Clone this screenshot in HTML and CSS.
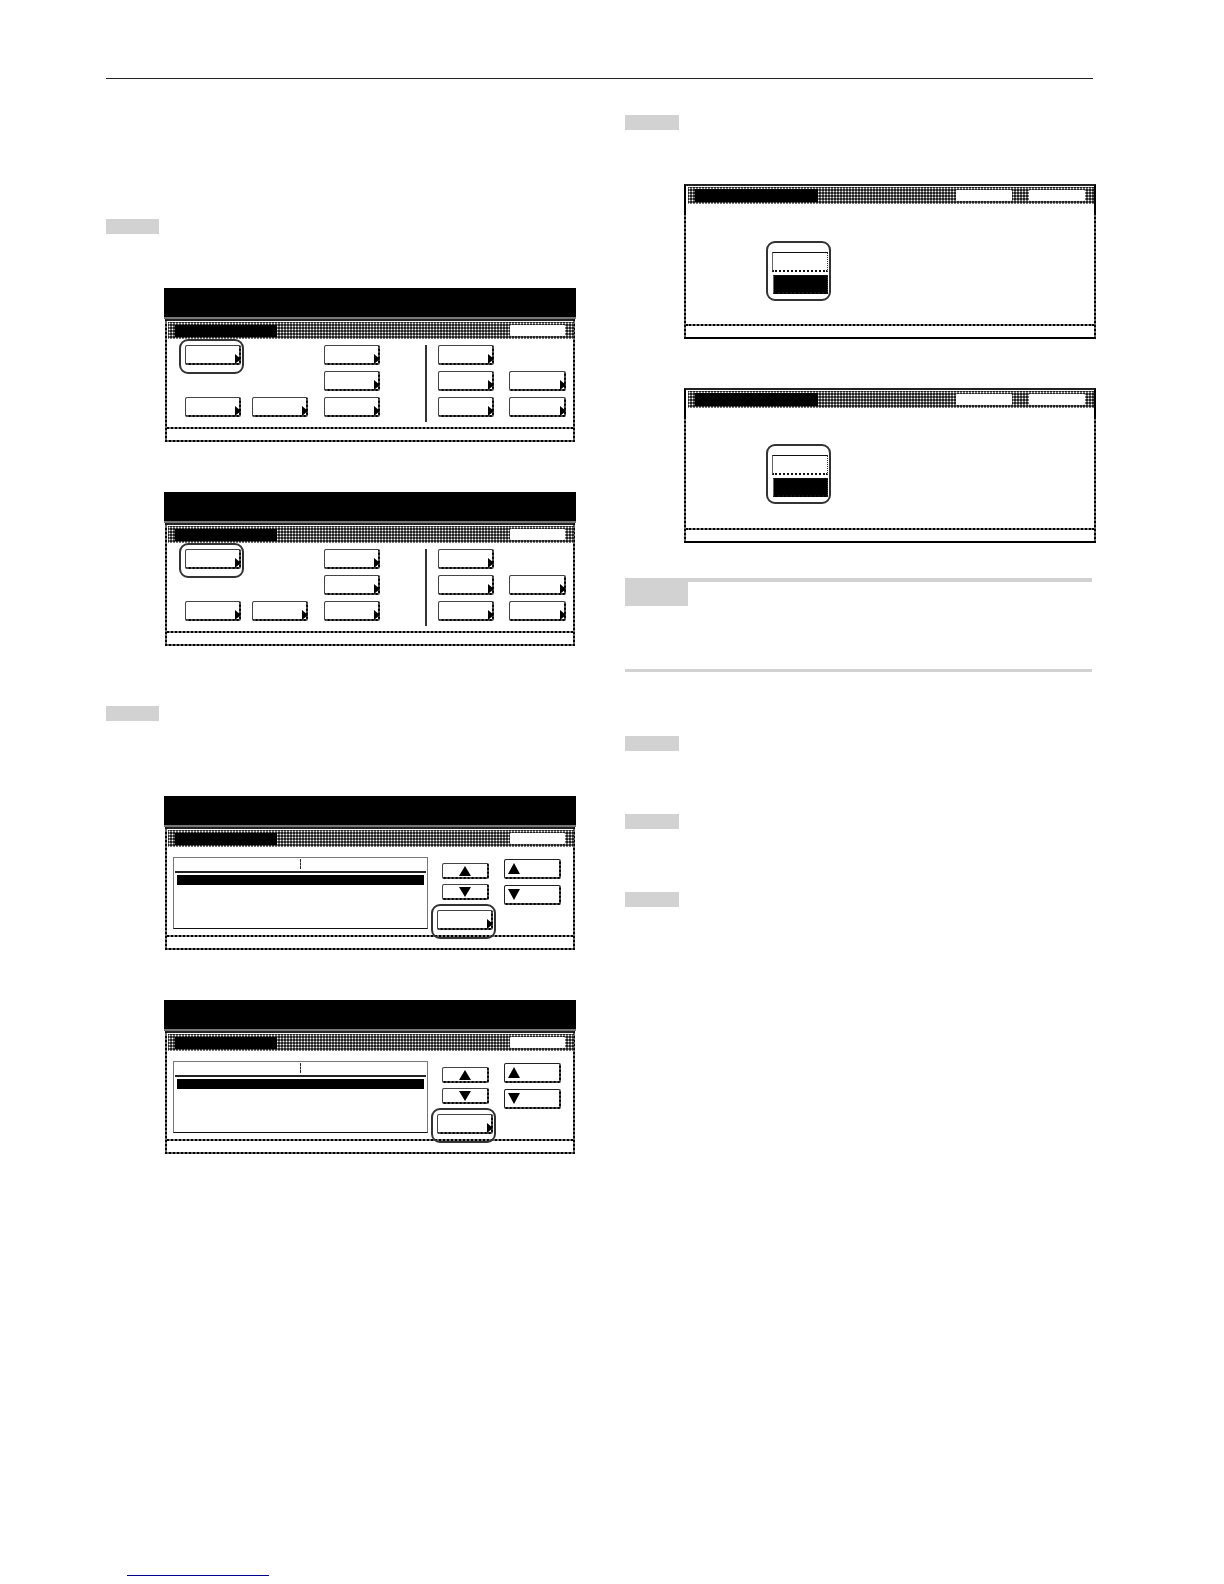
FILE: index.html
```html
<!DOCTYPE html>
<html>
<head>
  <meta charset="UTF-8">
  <title>Manual page</title>
  <link rel="stylesheet" href="styles.css">
</head>
<body>
  <div class="page">
    <div class="top-rule"></div>
    <div class="columns">
      <div class="left">
        <div class="tag tag-first"></div>

        <div class="screen menu-screen">
          <div class="head"></div>
          <div class="panel">
            <div class="titlebar"><div class="title"></div><div class="bar-btn"></div></div>
            <div class="menu-grid">
              <div class="btn ring c1 r1"></div>
              <div class="btn c3 r1"></div>
              <div class="btn c3 r2"></div>
              <div class="btn c1 r3"></div>
              <div class="btn c2 r3"></div>
              <div class="btn c3 r3"></div>
              <div class="sep"></div>
              <div class="btn c4 r1"></div>
              <div class="btn c4 r2"></div>
              <div class="btn c5 r2"></div>
              <div class="btn c4 r3"></div>
              <div class="btn c5 r3"></div>
            </div>
            <div class="foot"></div>
          </div>
        </div>

        <div class="screen menu-screen gap-small">
          <div class="head"></div>
          <div class="panel">
            <div class="titlebar"><div class="title"></div><div class="bar-btn"></div></div>
            <div class="menu-grid">
              <div class="btn ring c1 r1"></div>
              <div class="btn c3 r1"></div>
              <div class="btn c3 r2"></div>
              <div class="btn c1 r3"></div>
              <div class="btn c2 r3"></div>
              <div class="btn c3 r3"></div>
              <div class="sep"></div>
              <div class="btn c4 r1"></div>
              <div class="btn c4 r2"></div>
              <div class="btn c5 r2"></div>
              <div class="btn c4 r3"></div>
              <div class="btn c5 r3"></div>
            </div>
            <div class="foot"></div>
          </div>
        </div>

        <div class="tag tag-second"></div>

        <div class="screen list-screen">
          <div class="head"></div>
          <div class="panel">
            <div class="titlebar"><div class="title"></div><div class="bar-btn"></div></div>
            <div class="list-body">
              <div class="listbox">
                <div class="list-head"><span class="tick"></span></div>
                <div class="list-row"></div>
              </div>
              <div class="mid-btns">
                <div class="step-btn"><span class="up"></span></div>
                <div class="step-btn"><span class="down"></span></div>
                <div class="btn ring wide"></div>
              </div>
              <div class="side-btns">
                <div class="page-btn"><span class="up"></span></div>
                <div class="page-btn"><span class="down"></span></div>
              </div>
            </div>
            <div class="foot"></div>
          </div>
        </div>

        <div class="screen list-screen gap-small">
          <div class="head"></div>
          <div class="panel">
            <div class="titlebar"><div class="title"></div><div class="bar-btn"></div></div>
            <div class="list-body">
              <div class="listbox">
                <div class="list-head"><span class="tick"></span></div>
                <div class="list-row"></div>
              </div>
              <div class="mid-btns">
                <div class="step-btn"><span class="up"></span></div>
                <div class="step-btn"><span class="down"></span></div>
                <div class="btn ring wide"></div>
              </div>
              <div class="side-btns">
                <div class="page-btn"><span class="up"></span></div>
                <div class="page-btn"><span class="down"></span></div>
              </div>
            </div>
            <div class="foot"></div>
          </div>
        </div>
      </div>

      <div class="right">
        <div class="tag tag-right"></div>

        <div class="screen choice-screen">
          <div class="panel">
            <div class="titlebar"><div class="title"></div><div class="bar-btn"></div><div class="bar-btn"></div></div>
            <div class="choice-body">
              <div class="choice-ring">
                <div class="choice"></div>
                <div class="choice on"></div>
              </div>
            </div>
            <div class="foot"></div>
          </div>
        </div>

        <div class="screen choice-screen gap-choice">
          <div class="panel">
            <div class="titlebar"><div class="title"></div><div class="bar-btn"></div><div class="bar-btn"></div></div>
            <div class="choice-body">
              <div class="choice-ring">
                <div class="choice"></div>
                <div class="choice on"></div>
              </div>
            </div>
            <div class="foot"></div>
          </div>
        </div>

        <div class="note">
          <div class="note-tag"></div>
        </div>

        <div class="tag tag-a"></div>
        <div class="tag tag-b"></div>
        <div class="tag tag-b"></div>
      </div>
    </div>
    <div class="link-line"></div>
  </div>
</body>
</html>
```

FILE: styles.css
```css
body {
  margin: 0;
  background: #fff;
  font-family: "Liberation Sans", sans-serif;
}
.page {
  width: 1224px;
  height: 1584px;
  overflow: hidden;
  padding-top: 78px;
  box-sizing: border-box;
  position: relative;
}
.top-rule {
  margin-left: 106px;
  width: 987px;
  height: 1px;
  background: #222;
}
.columns {
  display: flex;
  margin-left: 106px;
}
.left {
  width: 519px;
}
.right {
  width: 467px;
}

.tag {
  width: 53px;
  height: 15px;
  background: #d2d2d2;
}
.tag-first {
  margin-top: 140px;
}
.tag-second {
  margin-top: 60px;
}
.tag-right {
  margin-top: 36px;
  width: 54px;
}
.tag-a {
  margin-top: 64px;
  width: 54px;
}
.tag-b {
  margin-top: 63px;
  width: 54px;
}

.screen {
  width: 412px;
  margin-left: 58px;
  margin-top: 54px;
}
.list-screen {
  margin-top: 75px;
}
.screen.gap-small {
  margin-top: 50px;
}
.head {
  height: 29px;
  background: #000;
  border-bottom: 2px solid #777;
}
.panel {
  height: 123px;
  margin: 0 1px;
  box-sizing: border-box;
  border: 2px dotted #000;
  border-top: 2px solid #222;
  background: linear-gradient(#fff, #fff) padding-box, #666;
  display: flex;
  flex-direction: column;
}
.titlebar {
  height: 17px;
  margin: 1px 0 0 1px;
  width: 406px;
  flex: none;
  display: flex;
  align-items: center;
  padding: 0 9px 0 7px;
  box-sizing: border-box;
  background: radial-gradient(circle, #fff 0.7px, #222 1.2px) 0 0 / 3px 3px;
}
.title {
  width: 102px;
  height: 12px;
  background: #000;
  margin-right: auto;
}
.bar-btn {
  width: 55px;
  height: 11px;
  background: #fff;
  border-radius: 1px;
}
.foot {
  margin-top: auto;
  height: 13px;
  flex: none;
  border-top: 2px dotted #000;
  box-sizing: border-box;
  background: linear-gradient(#fff, #fff) padding-box, #777;
}

.menu-grid {
  display: grid;
  grid-template-columns: 56px 11px 56px 16px 56px 45px 2px 11px 56px 15px 57px;
  grid-template-rows: 20px 20px 20px;
  row-gap: 6px;
  margin: 6px 0 0 18px;
}
.c1 { grid-column: 1; }
.c2 { grid-column: 3; }
.c3 { grid-column: 5; }
.c4 { grid-column: 9; }
.c5 { grid-column: 11; }
.r1 { grid-row: 1; }
.r2 { grid-row: 2; }
.r3 { grid-row: 3; }
.sep {
  grid-column: 7;
  grid-row: 1 / 4;
  height: 77px;
  background: #333;
}

.btn {
  position: relative;
  box-sizing: border-box;
  background: linear-gradient(#fff, #fff) padding-box, #555;
  border: 1px solid #444;
  border-right: 2px dotted #000;
  border-bottom: 2px dotted #000;
  border-radius: 2px;
}
.btn::before {
  content: "";
  position: absolute;
  right: -2px;
  bottom: -1px;
  border-left: 6px solid #000;
  border-top: 5px solid transparent;
  border-bottom: 5px solid transparent;
}
.ring::after {
  content: "";
  position: absolute;
  left: -7px;
  right: -5px;
  top: -7px;
  bottom: -11px;
  border: 2px solid #333;
  border-radius: 9px;
}

.list-body {
  display: flex;
  padding: 10px 0 0 6px;
}
.listbox {
  width: 255px;
  height: 72px;
  box-sizing: border-box;
  border: 1px solid #777;
  border-bottom: 1px solid #111;
  flex: none;
}
.list-head {
  position: relative;
  height: 13px;
  margin: 0 1px;
  border-bottom: 2px solid #222;
}
.tick {
  position: absolute;
  left: 125px;
  top: 1px;
  height: 10px;
  border-left: 1px dashed #222;
}
.list-row {
  height: 10px;
  margin: 2px 3px 0;
  background: #000;
}
.mid-btns {
  width: 56px;
  margin: 6px 0 0 9px;
  display: flex;
  flex-direction: column;
  align-items: flex-end;
  gap: 5px;
}
.step-btn {
  width: 47px;
  height: 16px;
  margin-right: 4px;
  flex: none;
  box-sizing: border-box;
  background: linear-gradient(#fff, #fff) padding-box, #555;
  border: 1px solid #444;
  border-right: 2px dotted #000;
  border-bottom: 2px dotted #000;
  border-radius: 2px;
  display: flex;
  align-items: center;
  justify-content: center;
}
.step-btn + .step-btn {
  margin-bottom: 5px;
}
.wide {
  width: 56px;
  height: 20px;
  flex: none;
}
.side-btns {
  margin: 2px 0 0 11px;
  display: flex;
  flex-direction: column;
  gap: 6px;
}
.page-btn {
  width: 57px;
  height: 20px;
  box-sizing: border-box;
  background: linear-gradient(#fff, #fff) padding-box, #555;
  border: 1px solid #222;
  border-right: 2px dotted #000;
  border-bottom: 2px dotted #000;
  border-radius: 2px;
  display: flex;
  align-items: center;
  padding-left: 3px;
}
.up {
  width: 0;
  height: 0;
  border-left: 6px solid transparent;
  border-right: 6px solid transparent;
  border-bottom: 10px solid #000;
}
.down {
  width: 0;
  height: 0;
  border-left: 6px solid transparent;
  border-right: 6px solid transparent;
  border-top: 10px solid #000;
}
.page-btn .up {
  border-left-width: 6px;
  border-right-width: 6px;
  border-bottom-width: 11px;
}
.page-btn .down {
  border-left-width: 6px;
  border-right-width: 6px;
  border-top-width: 11px;
}

.choice-screen {
  margin-left: 59px;
  margin-top: 54px;
}
.choice-screen .panel {
  height: 155px;
  margin: 0;
  /* side edges stay solid next to the title bar */
  background: linear-gradient(#fff, #fff) padding-box, linear-gradient(#000 28px, #666 0);
}
.choice-screen .titlebar {
  margin-left: 2px;
}
.choice-screen .title {
  width: 123px;
  height: 13px;
}
.choice-screen .bar-btn {
  width: 56px;
  margin-left: 17px;
}
.choice-screen .title + .bar-btn {
  margin-left: 0;
}
.screen.gap-choice {
  margin-top: 49px;
}
.choice-body {
  padding: 37px 0 0 80px;
}
.gap-choice .choice-body {
  padding-top: 36px;
}
.choice-ring {
  width: 65px;
  height: 60px;
  box-sizing: border-box;
  border: 2px solid #333;
  border-radius: 9px;
  padding: 9px 1px 0 4px;
  display: flex;
  flex-direction: column;
  gap: 3px;
}
.choice {
  height: 20px;
  box-sizing: border-box;
  border: 1px solid #666;
  border-top: 1px solid #111;
  border-bottom: 2px dotted #111;
  border-right: 1px dotted #333;
}
.choice.on {
  height: 19px;
  background: #000;
  margin-left: 1px;
}

.note {
  margin-top: 35px;
  height: 94px;
  box-sizing: border-box;
  border-top: 4px solid #d2d2d2;
  border-bottom: 3px solid #d2d2d2;
}
.note-tag {
  width: 63px;
  height: 24px;
  background: #d2d2d2;
}

.link-line {
  position: absolute;
  left: 127px;
  top: 1575px;
  width: 142px;
  height: 1px;
  background: #00008b;
}
```
